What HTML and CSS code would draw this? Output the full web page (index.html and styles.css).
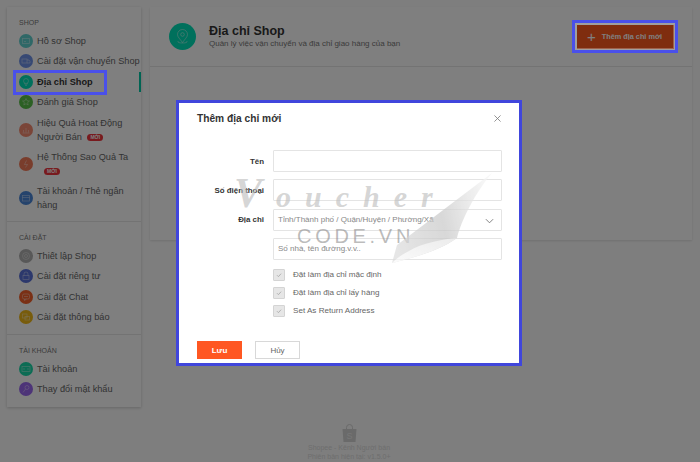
FILE: index.html
```html
<!DOCTYPE html>
<html lang="en">
<head>
    <meta charset="UTF-8">
    <title>Địa chỉ Shop</title>
    <link rel="stylesheet" href="styles.css">
</head>
<body>
    <div class="page">
        <aside class="sidebar">
            <section class="side-group">
                <h4>SHOP</h4>
                <a class="side-item"><span class="ico c-teal"><svg viewBox="0 0 14 14"><rect x="3.500" y="4.500" width="7" height="5"/><path d="M5 7.500h2"/></svg></span><span>Hồ sơ Shop</span></a>
                <a class="side-item"><span class="ico c-blue"><svg viewBox="0 0 14 14"><rect x="3" y="5" width="5" height="4"/><path d="M8 6h2l1 1.500V9H8"/></svg></span><span>Cài đặt vận chuyển Shop</span></a>
                <a class="side-item active"><span class="ico c-green"><svg viewBox="0 0 14 14"><circle cx="7" cy="6" r="2.500"/><path d="M5.500 8l1.500 3 1.500-3"/></svg></span><span>Địa chỉ Shop</span></a>
                <a class="side-item"><span class="ico c-lime"><svg viewBox="0 0 14 14"><path d="M7 3.500l1 2.300 2.500.2-1.900 1.600.6 2.400L7 8.700 4.800 10l.6-2.400L3.500 6l2.500-.2z"/></svg></span><span>Đánh giá Shop</span></a>
                <a class="side-item"><span class="ico c-salmon"><svg viewBox="0 0 14 14"><path d="M3.500 10h7M4.500 9.500V7M7 9.500V5M9.500 9.500V7"/></svg></span><span>Hiệu Quả Hoat Động<br>Người Bán <b class="tag">MỚI</b></span></a>
                <a class="side-item"><span class="ico c-coral"><svg viewBox="0 0 14 14"><path d="M7.500 3.500L5.500 7.500h3l-2 3"/></svg></span><span>Hệ Thống Sao Quả Ta<br><b class="tag tag-line">MỚI</b></span></a>
                <a class="side-item"><span class="ico c-navy"><svg viewBox="0 0 14 14"><rect x="3.500" y="4.500" width="7" height="5.500"/><path d="M3.500 6.500h7"/></svg></span><span>Tài khoản / Thẻ ngân<br>hàng</span></a>
            </section>
            <section class="side-group">
                <h4>CÀI ĐẶT</h4>
                <a class="side-item"><span class="ico c-gray"><svg viewBox="0 0 14 14"><circle cx="7" cy="7" r="1.500"/><circle cx="7" cy="7" r="3.500"/></svg></span><span>Thiết lập Shop</span></a>
                <a class="side-item"><span class="ico c-indigo"><svg viewBox="0 0 14 14"><rect x="4" y="6.500" width="6" height="4"/><path d="M5 6.500V5a2 2 0 0 1 4 0v1.500"/></svg></span><span>Cài đặt riêng tư</span></a>
                <a class="side-item"><span class="ico c-orange"><svg viewBox="0 0 14 14"><rect x="3.500" y="4" width="7" height="5" rx="1.500"/><path d="M5.500 9v1.500L7.500 9M5 6.500h4"/></svg></span><span>Cài đặt Chat</span></a>
                <a class="side-item"><span class="ico c-amber"><svg viewBox="0 0 14 14"><rect x="3.500" y="4" width="4.500" height="4"/><rect x="6" y="6.500" width="4.500" height="3.500"/></svg></span><span>Cài đặt thông báo</span></a>
            </section>
            <section class="side-group">
                <h4>TÀI KHOẢN</h4>
                <a class="side-item"><span class="ico c-emerald"><svg viewBox="0 0 14 14"><rect x="3" y="4.500" width="8" height="5"/><path d="M5 6v2M9 6v2"/></svg></span><span>Tài khoản</span></a>
                <a class="side-item"><span class="ico c-purple"><svg viewBox="0 0 14 14"><circle cx="8" cy="5.500" r="2"/><path d="M6.500 7L4 10.500"/></svg></span><span>Thay đổi mật khẩu</span></a>
            </section>
        </aside>

        <div class="main-col">
            <main class="panel">
                <header class="panel-head">
                    <span class="head-ico">
                        <svg viewBox="0 0 27 27"><path d="M13.500 6.500a5 5 0 0 1 5 5c0 2.500-2.500 4.500-5 8c-2.500-3.500-5-5.500-5-8a5 5 0 0 1 5-5z"/><circle cx="13.500" cy="11.500" r="1.800"/><path d="M9.500 18c-1 .8-.8 2 4 2s5-1.200 4-2"/></svg>
                    </span>
                    <div class="head-text">
                        <h1>Địa chỉ Shop</h1>
                        <p>Quản lý việc vận chuyển và địa chỉ giao hàng của bạn</p>
                    </div>
                    <button class="btn-add"><span class="plus">+</span>Thêm địa chỉ mới</button>
                </header>
            </main>
            <footer class="foot">
                <svg class="bag" viewBox="0 0 15 18"><path d="M.5 5h14l-1 13H1.500z"/><path class="bag-handle" d="M4.500 5V3.500a3 3 0 0 1 6 0V5"/><text x="7.500" y="15" text-anchor="middle">S</text></svg>
                <p>Shopee - Kênh Người bán</p>
                <p>Phiên bản hiện tại: v1.5.0+</p>
            </footer>
        </div>
    </div>

    <div class="overlay"></div>
    <div class="mark mark-menu"></div>
    <div class="mark mark-add"></div>

    <div class="modal">
        <div class="modal-top">
            <h2>Thêm địa chỉ mới</h2>
            <svg class="close" viewBox="0 0 8 8"><path d="M.5.500l7 7M7.500.500l-7 7"/></svg>
        </div>
        <form class="form">
            <div class="row"><label>Tên</label><div class="input"></div></div>
            <div class="row"><label>Số điện thoại</label><div class="input"></div></div>
            <div class="row">
                <label>Địa chỉ</label>
                <div class="input">Tỉnh/Thành phố / Quận/Huyện / Phường/Xã
                    <svg class="chev" viewBox="0 0 10 6"><path d="M1 1l4 4 4-4"/></svg>
                </div>
            </div>
            <div class="row"><label></label><div class="input">Số nhà, tên đường.v.v..</div></div>
            <div class="checks">
                <div class="check"><span class="box"><svg viewBox="0 0 12 12"><path d="M3.500 6.200l1.800 1.800 3.200-3.600"/></svg></span>Đặt làm địa chỉ mặc định</div>
                <div class="check"><span class="box"><svg viewBox="0 0 12 12"><path d="M3.500 6.200l1.800 1.800 3.200-3.600"/></svg></span>Đặt làm địa chỉ lấy hàng</div>
                <div class="check"><span class="box"><svg viewBox="0 0 12 12"><path d="M3.500 6.200l1.800 1.800 3.200-3.600"/></svg></span>Set As Return Address</div>
            </div>
        </form>
        <div class="modal-actions">
            <button class="btn-save">Lưu</button>
            <button class="btn-cancel">Hủy</button>
        </div>

        <!-- watermark sits on top of the form -->
        <div class="wm wm-top">Voucher</div>
        <div class="wm wm-code">CODE.VN</div>
        <svg class="wm-curl" viewBox="0 0 105 95">
            <defs>
                <linearGradient id="curl" x1="0" y1="0.6" x2="1" y2="0.4">
                    <stop offset="0" stop-color="#dcdcdc"/>
                    <stop offset=".5" stop-color="#c8c8c8"/>
                    <stop offset=".75" stop-color="#e0e0e0"/>
                    <stop offset="1" stop-color="#f4f4f4"/>
                </linearGradient>
                <linearGradient id="fold" x1="0" y1="1" x2="1" y2="0">
                    <stop offset="0" stop-color="#fafafa"/>
                    <stop offset="1" stop-color="#e4e4e4"/>
                </linearGradient>
            </defs>
            <path fill="url(#curl)" d="M103 2L8 74L3 92C20 88 50 80 68 67C72 50 86 22 103 2Z"/>
            <path fill="url(#fold)" d="M3 92C20 88 50 80 68 67C55 68 32 72 20 80C12 84 7 88 3 92Z"/>
        </svg>
    </div>
</body>
</html>
```

FILE: styles.css
```css
* {
    box-sizing: border-box;
}

html, body {
    height: 100%;
}

body {
    margin: 0;
    background-color: #fdfdfd;
    font-family: "Liberation Sans", Arial, sans-serif;
    color: #333333;
    overflow: hidden;
    position: relative;
}

.page {
    display: flex;
    gap: 9px;
    padding: 7px 8px 0 7px;
}

/* sidebar */
.sidebar {
    width: 134px;
    height: 400px;
    flex-shrink: 0;
    background-color: #ffffff;
    box-shadow: 0 1px 3px rgba(0, 0, 0, 0.2);
}

.side-group {
    padding: 9.500px 0 6.500px;
    border-bottom: 1px solid #e6e6e6;
}

.side-group:last-child {
    border-bottom: none;
}

.side-group h4 {
    margin: 0 0 3px;
    padding-left: 12px;
    font-size: 7px;
    line-height: 11px;
    font-weight: 400;
    color: #777777;
}

.side-item {
    display: flex;
    align-items: center;
    gap: 4px;
    min-height: 20.500px;
    padding: 3px 0 3px 12px;
    font-size: 9.200px;
    line-height: 14px;
    color: #666666;
    white-space: nowrap;
    position: relative;
}

.side-item.active {
    color: #333333;
    font-weight: 700;
}

.side-item.active::after {
    content: "";
    position: absolute;
    right: 0;
    top: 0;
    bottom: 0;
    width: 2px;
    background-color: #00c9a7;
}

.ico {
    width: 14px;
    height: 14px;
    border-radius: 50%;
    flex-shrink: 0;
    display: block;
}

.ico svg {
    display: block;
    fill: none;
    stroke: rgba(255, 255, 255, 0.45);
    stroke-width: 0.8;
}

.c-teal { background-color: #5fd0cf; }
.c-blue { background-color: #6f93e8; }
.c-green { background-color: #00e0b8; }
.c-lime { background-color: #58c048; }
.c-salmon { background-color: #f58a70; }
.c-coral { background-color: #f37a58; }
.c-navy { background-color: #4a86d8; }
.c-gray { background-color: #b0b0b0; }
.c-indigo { background-color: #5870d8; }
.c-orange { background-color: #f5602a; }
.c-amber { background-color: #f0b818; }
.c-emerald { background-color: #18d8a8; }
.c-purple { background-color: #9a68f0; }

.tag {
    display: inline-block;
    padding: 0 3px;
    margin-left: 3px;
    border-radius: 5px;
    background-color: #f0343c;
    color: #ffffff;
    font-size: 5px;
    line-height: 7px;
    vertical-align: 1px;
}

.tag-line {
    margin-left: 7px;
}

/* main panel */
.main-col {
    flex: 1;
    min-width: 0;
}

.panel {
    height: 233px;
    background-color: #ffffff;
    box-shadow: 0 1px 2px rgba(0, 0, 0, 0.12);
}

.panel-head {
    display: flex;
    align-items: center;
    height: 60px;
    padding: 0 19px;
    border-bottom: 1px solid #e6e6e6;
}

.head-ico {
    width: 27px;
    height: 27px;
    border-radius: 50%;
    background-color: #00e0b8;
    margin-right: 13px;
    flex-shrink: 0;
}

.head-ico svg {
    display: block;
    fill: none;
    stroke: rgba(255, 255, 255, 0.55);
    stroke-width: 0.8;
}

.head-text {
    flex: 1;
}

.head-text h1 {
    margin: 0;
    font-size: 12.500px;
    line-height: 14px;
    color: #333333;
}

.head-text p {
    margin: 0;
    font-size: 8px;
    line-height: 11px;
    color: #777777;
}

.btn-add {
    width: 97px;
    height: 24px;
    margin-right: -1px;
    border: none;
    background-color: #ff5a1f;
    color: #ffffff;
    font-family: inherit;
    font-size: 7.300px;
    font-weight: 700;
    display: flex;
    align-items: center;
    padding: 0 0 0 10px;
}

.plus {
    font-size: 15px;
    font-weight: 400;
    line-height: 1;
    margin-right: 6px;
}

.foot {
    margin: 184px 144px 0 0;
    text-align: center;
    font-size: 7px;
    line-height: 8.500px;
    color: #dcdcdc;
}

.foot p {
    margin: 0;
}

.bag {
    display: block;
    width: 15px;
    height: 18px;
    margin: 0 auto 2px;
    fill: #d4d4d4;
}

.bag text {
    font-size: 9px;
    fill: #eeeeee;
}

.bag-handle {
    fill: none;
    stroke: #d4d4d4;
}

.overlay {
    position: absolute;
    inset: 0;
    background-color: rgba(0, 0, 0, 0.5);
}

/* annotation boxes over the screenshot */
.mark {
    position: absolute;
    border: 3px solid #4a50ea;
}

.mark-menu {
    left: 13px;
    top: 70px;
    width: 94px;
    height: 25px;
}

.mark-add {
    left: 572px;
    top: 20px;
    width: 106px;
    height: 33px;
    box-shadow: inset 0 0 0 2px rgba(255, 255, 255, 0.25);
}

/* modal */
.modal {
    position: absolute;
    left: 176px;
    top: 100px;
    width: 346px;
    height: 266px;
    background-color: #ffffff;
    border: 3px solid #4046dc;
    padding: 0 18px;
    display: flex;
    flex-direction: column;
}

.modal-top {
    display: flex;
    justify-content: space-between;
    align-items: center;
    height: 30px;
}

.modal-top h2 {
    margin: 0;
    font-size: 10.200px;
    color: #333333;
}

.close {
    width: 7px;
    height: 7px;
    fill: none;
    stroke: #777777;
    stroke-width: 0.9;
}

.form {
    margin-top: 17px;
}

.row {
    display: flex;
    align-items: center;
    margin-bottom: 7.330px;
}

.row label {
    width: 67px;
    margin-right: 9px;
    flex-shrink: 0;
    text-align: right;
    font-size: 7.900px;
    font-weight: 700;
    color: #333333;
}

.input {
    width: 229px;
    height: 22px;
    flex-shrink: 0;
    border: 1px solid #e4e4e4;
    border-radius: 1px;
    padding-left: 4px;
    font-size: 8px;
    line-height: 20px;
    color: #888888;
    position: relative;
}

.chev {
    position: absolute;
    right: 7px;
    top: 8px;
    width: 9px;
    height: 6px;
    fill: none;
    stroke: #666666;
    stroke-width: 0.9;
}

.checks {
    margin: 9px 0 0 76px;
    display: flex;
    flex-direction: column;
    gap: 6px;
}

.check {
    display: flex;
    align-items: center;
    gap: 8px;
    font-size: 8.100px;
    line-height: 12px;
    color: #666666;
}

.box {
    width: 12px;
    height: 12px;
    background-color: #e6e6e6;
    border: 1px solid #d4d4d4;
    border-radius: 1px;
}

.box svg {
    display: block;
    width: 10px;
    height: 10px;
    fill: none;
    stroke: #a8a8a8;
    stroke-width: 1;
}

.modal-actions {
    margin-top: auto;
    padding-bottom: 4px;
    display: flex;
    gap: 13px;
}

.btn-save, .btn-cancel {
    width: 45px;
    height: 18px;
    padding: 0;
    font-family: inherit;
    font-size: 8px;
}

.btn-save {
    background-color: #ff5722;
    border: none;
    color: #ffffff;
    font-weight: 700;
}

.btn-cancel {
    background-color: #ffffff;
    border: 1px solid #d8d8d8;
    color: #666666;
}

/* voucher watermark */
.wm {
    position: absolute;
    white-space: nowrap;
    pointer-events: none;
}

.wm-top {
    left: 55px;
    top: 70px;
    color: rgba(190, 190, 190, 0.65);
    font-family: "Liberation Serif", serif;
    font-style: italic;
    font-weight: 700;
    font-size: 30px;
    line-height: 40px;
    letter-spacing: 14px;
}

.wm-top::first-letter {
    font-size: 42px;
}

.wm-code {
    left: 118px;
    top: 122px;
    color: rgba(130, 130, 130, 0.55);
    font-size: 20px;
    line-height: 22px;
    letter-spacing: 3.700px;
}

.wm-curl {
    position: absolute;
    left: 210px;
    top: 68px;
    width: 105px;
    height: 95px;
    opacity: 0.7;
}
```
